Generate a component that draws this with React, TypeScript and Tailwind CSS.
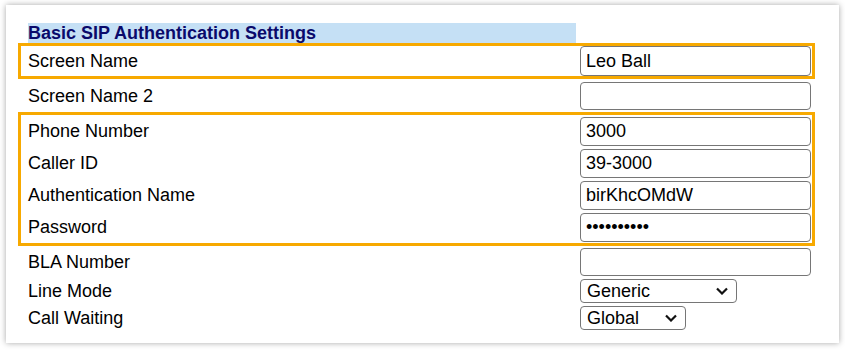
import type { ReactNode } from "react";

type RowProps = { label: string; h: string; children: ReactNode; boxed?: boolean };

const Row = ({ label, h, children, boxed }: RowProps) => (
  <div className={`flex items-center ${h} ${boxed ? "pl-[7px]" : "pl-[10px]"}`}>
    <div className="w-[552px] shrink-0 leading-none">{label}</div>
    {children}
  </div>
);

const TextInput = ({ value, h, type = "text" }: { value: string; h: string; type?: string }) => (
  <input
    type={type}
    readOnly
    value={value}
    className={`w-[231px] ${h} rounded-[4px] border border-[#767676] bg-white px-[5px] text-[18px] text-black outline-none`}
  />
);

const Select = ({ value, w }: { value: string; w: string }) => (
  <div
    className={`relative flex h-[24px] ${w} items-center rounded-[4px] border border-[#767676] bg-white pl-[6px] text-[18px] leading-none`}
  >
    <span>{value}</span>
    <svg
      aria-hidden="true"
      viewBox="0 0 12 8"
      className="absolute right-[8px] top-1/2 h-[8px] w-[12px] -translate-y-1/2"
    >
      <path d="M1 1.5 6 6.5 11 1.5" fill="none" stroke="#111" strokeWidth="2.2" />
    </svg>
  </div>
);

export default function App() {
  return (
    <div className="min-h-screen bg-white pl-[6px] pt-[5px] font-['Liberation_Sans',Arial,sans-serif] text-[18px] text-black">
      <div className="h-[338px] w-[833px] bg-white pl-[12px] pt-[18px] shadow-[0_0_6px_rgba(0,0,0,0.35)]">
        <div className="ml-[10px] h-[20px] w-[548px] bg-[#c5e0f5] text-[18px] font-bold leading-[20px] text-[#0a0a6b]">
          Basic SIP Authentication Settings
        </div>

        <div className="w-[797px] border-[3px] border-[#f7a900]">
          <Row label="Screen Name" h="h-[30px]" boxed>
            <TextInput value="Leo Ball" h="h-[30px]" />
          </Row>
        </div>

        <Row label="Screen Name 2" h="h-[33px]">
          <TextInput value="" h="h-[28px]" />
        </Row>

        <div className="w-[797px] border-[3px] border-[#f7a900]">
          <Row label="Phone Number" h="h-[32px]" boxed>
            <TextInput value="3000" h="h-[29px]" />
          </Row>
          <Row label="Caller ID" h="h-[32px]" boxed>
            <TextInput value="39-3000" h="h-[29px]" />
          </Row>
          <Row label="Authentication Name" h="h-[32px]" boxed>
            <TextInput value="birKhcOMdW" h="h-[29px]" />
          </Row>
          <Row label="Password" h="h-[32px]" boxed>
            <TextInput value="abcdefghij" type="password" h="h-[29px]" />
          </Row>
        </div>

        <Row label="BLA Number" h="h-[31px]">
          <TextInput value="" h="h-[28px]" />
        </Row>
        <Row label="Line Mode" h="h-[27px]">
          <Select value="Generic" w="w-[157px]" />
        </Row>
        <Row label="Call Waiting" h="h-[27px]">
          <Select value="Global" w="w-[106px]" />
        </Row>
      </div>
    </div>
  );
}
